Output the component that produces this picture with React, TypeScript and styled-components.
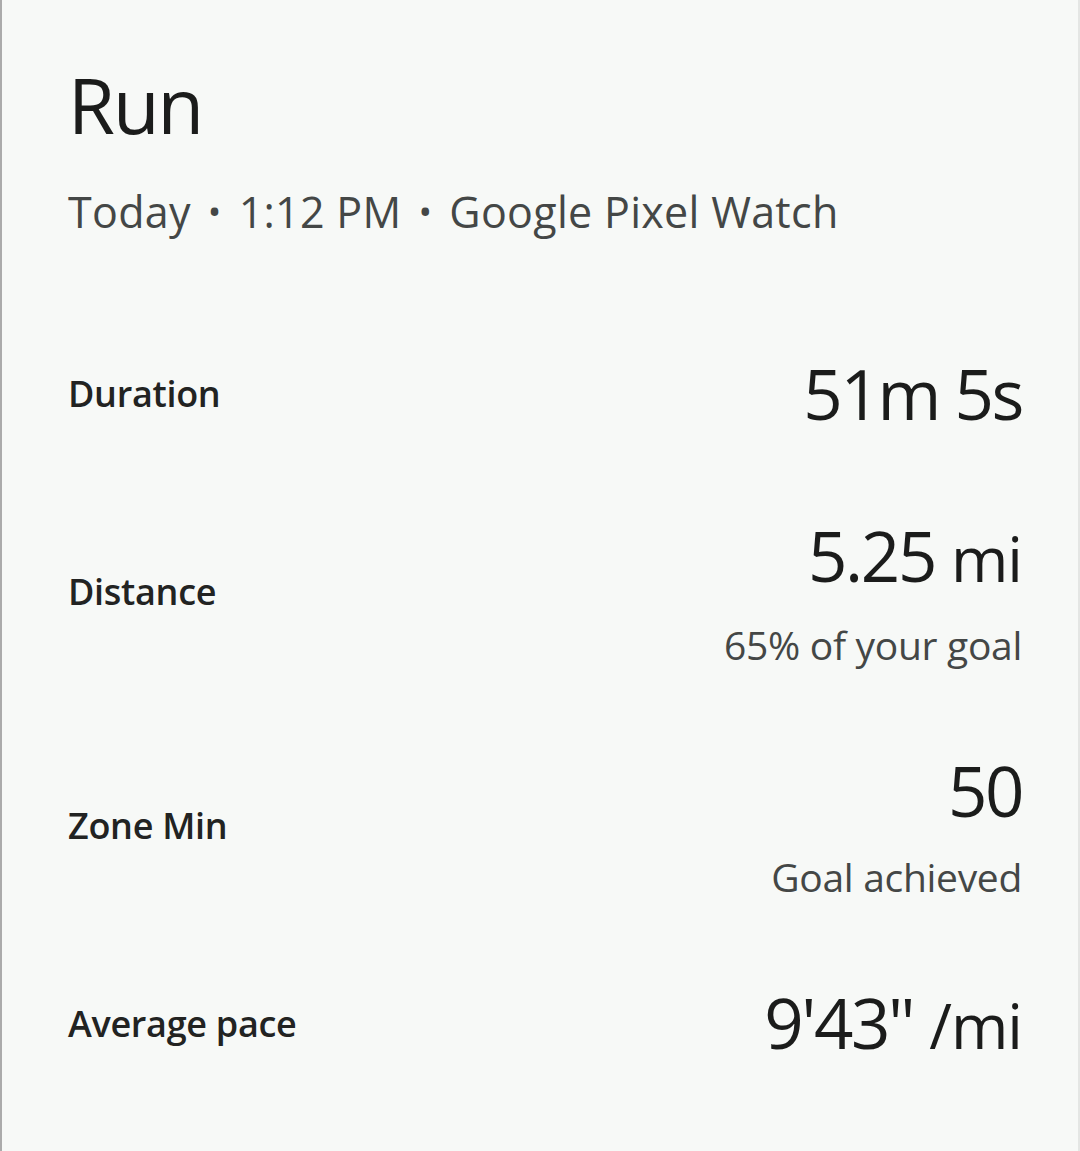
import styled, { createGlobalStyle } from 'styled-components'

const GlobalStyle = createGlobalStyle`
  html, body {
    margin: 0;
    padding: 0;
    background: #f7f9f7;
  }
  body {
    font-family: "Open Sans", "Noto Sans", sans-serif;
  }
`;

const Screen = styled.div`
  box-sizing: border-box;
  width: 1080px;
  min-height: 1151px;
  background: #f7f9f7;
  border-left: 2px solid #ababab;
  border-right: 2px solid #e4e6e4;
  padding: 53px 56px 0 66px;
  display: flex;
  flex-direction: column;
`;

const Title = styled.h1`
  margin: 0;
  font-size: 76px;
  font-weight: 400;
  line-height: 104px;
  color: #1b1c1b;
  letter-spacing: -2px;
`;

const Subtitle = styled.div`
  margin-top: 23px;
  font-size: 43px;
  line-height: 64px;
  color: #444746;
  letter-spacing: 0.3px;
`;

const Dot = styled.span`
  margin: 0 17px;
  font-size: 36px;
  vertical-align: 3px;
`;

const Stats = styled.div`
  margin-top: 109px;
  display: flex;
  flex-direction: column;
  gap: 82px;
`;

const Row = styled.div`
  display: flex;
  align-items: center;
  justify-content: space-between;
`;

const Label = styled.div`
  font-size: 36px;
  font-weight: 600;
  color: #222322;
  letter-spacing: -0.3px;
`;

const ValueBlock = styled.div`
  display: flex;
  flex-direction: column;
  align-items: flex-end;
`;

const Value = styled.div`
  font-size: 69px;
  line-height: 80px;
  font-weight: 400;
  color: #1b1c1b;
  letter-spacing: -2.4px;
`;

const Unit = styled.span`
  font-size: 62px;
  letter-spacing: -1px;
  margin-left: 16px;
`;

const Note = styled.div`
  margin-top: 24px;
  font-size: 39px;
  line-height: 46px;
  color: #444746;
  letter-spacing: -0.3px;
`;

type Stat = { label: string; value: string; unit?: string; note?: string };

const stats: Stat[] = [
  { label: 'Duration', value: '51m 5s' },
  { label: 'Distance', value: '5.25', unit: 'mi', note: '65% of your goal' },
  { label: 'Zone Min', value: '50', note: 'Goal achieved' },
  { label: 'Average pace', value: '9\'43"', unit: '/mi' },
];

export default function App() {
  return (
    <>
      <GlobalStyle />
      <Screen>
        <Title>Run</Title>
        <Subtitle>
          Today<Dot>•</Dot>1:12 PM<Dot>•</Dot>Google Pixel Watch
        </Subtitle>
        <Stats>
          {stats.map((s) => (
            <Row key={s.label}>
              <Label>{s.label}</Label>
              <ValueBlock>
                <Value>
                  {s.value}
                  {s.unit && <Unit>{s.unit}</Unit>}
                </Value>
                {s.note && <Note>{s.note}</Note>}
              </ValueBlock>
            </Row>
          ))}
        </Stats>
      </Screen>
    </>
  )
}
